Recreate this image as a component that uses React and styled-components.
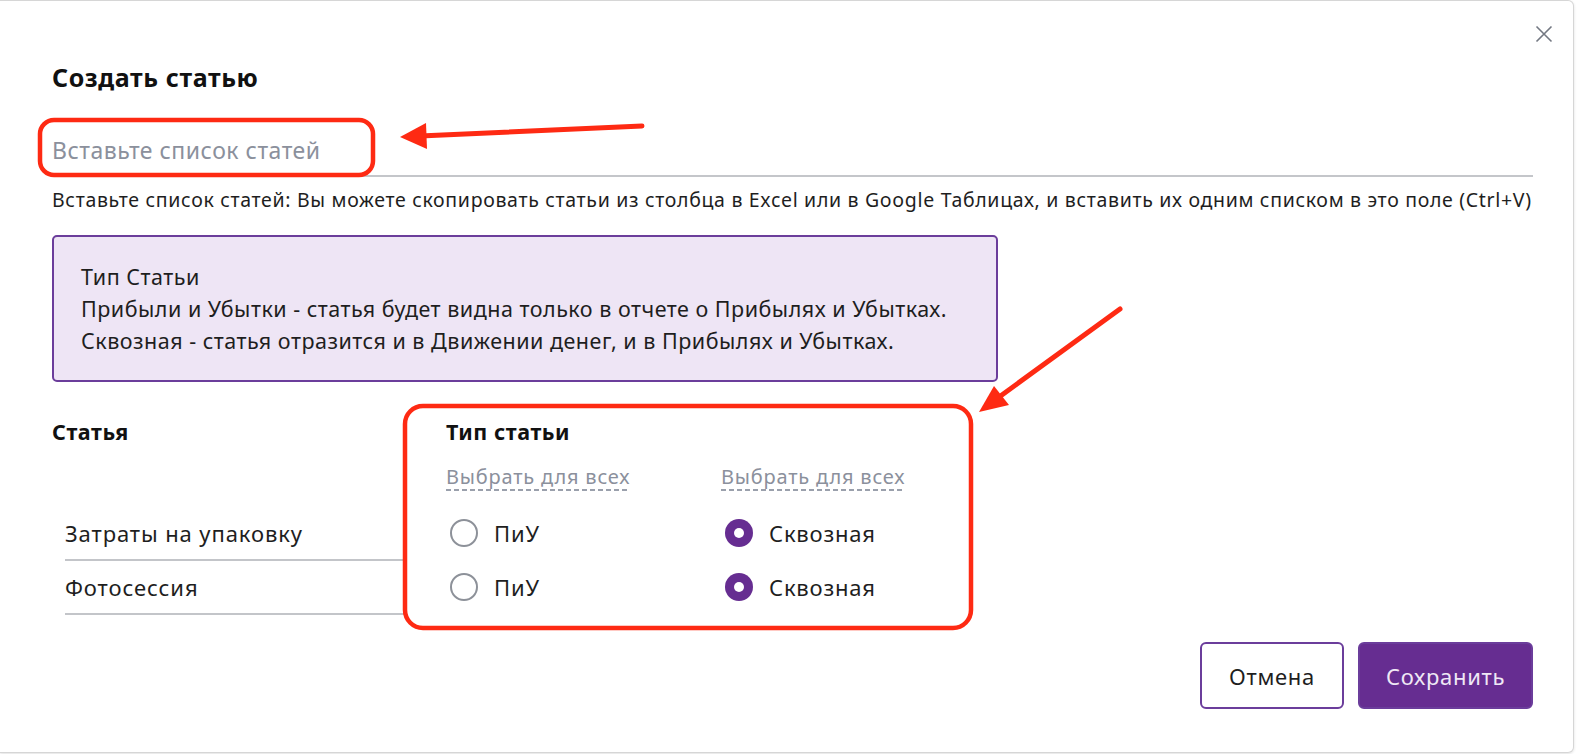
import React from "react"
import styled, { createGlobalStyle } from "styled-components"

const GlobalStyle = createGlobalStyle`
  html, body { margin: 0; padding: 0; background: #fff; }
  body { font-family: "Noto Sans", "Open Sans", sans-serif; color: #1e1e1e; }
  * { box-sizing: border-box; }
`;

const Page = styled.div`
  position: relative;
  width: 1580px;
  height: 754px;
  overflow: hidden;
  background: #fff;
`;

const Modal = styled.div`
  position: relative;
  width: 1574px;
  height: 753px;
  padding: 62px 40px 0 52px;
  background: #fff;
  border: 1px solid #d6d6d6;
  border-left: none;
  border-radius: 0 6px 6px 0;
  box-shadow: 0 1px 3px rgba(0, 0, 0, 0.12);
  display: flex;
  flex-direction: column;
`;

const Close = styled.button`
  position: absolute;
  top: 22px;
  right: 18px;
  width: 22px;
  height: 22px;
  padding: 0;
  border: none;
  background: none;
  display: flex;
  align-items: center;
  justify-content: center;
  cursor: pointer;
`;

const Title = styled.h2`
  margin: 0;
  font-size: 25px;
  line-height: 28px;
  font-weight: 700;
  letter-spacing: 0.6px;
  color: #111;
`;

const PasteInput = styled.input`
  margin-top: 34px;
  width: 100%;
  height: 52px;
  padding: 0;
  border: none;
  border-bottom: 2px solid #c4c6ca;
  outline: none;
  font-family: inherit;
  font-size: 23px;
  letter-spacing: 0.5px;
  color: #222;
  background: transparent;

  &::placeholder {
    color: #8b909c;
  }
`;

const Hint = styled.div`
  margin-top: 12px;
  font-size: 19.5px;
  line-height: 22px;
  letter-spacing: 0.68px;
  white-space: nowrap;
  color: #1e1e1e;
`;

const InfoBox = styled.div`
  margin-top: 24px;
  width: 946px;
  height: 147px;
  padding: 24px 27px 0;
  background: #eee5f5;
  border: 2px solid #6b3d9b;
  border-radius: 5px;
  font-size: 21.5px;
  line-height: 32px;
  letter-spacing: 0.5px;
  color: #1e1e1e;
`;

const Table = styled.div`
  margin-top: 38px;
  display: grid;
  grid-template-columns: 394px 275px 1fr;
  grid-auto-rows: auto;
`;

const HeadCell = styled.div`
  grid-column: ${p => p.$span || "auto"};
  font-size: 21.5px;
  line-height: 24px;
  font-weight: 700;
  letter-spacing: 0.55px;
  color: #111;
`;

const SelectCell = styled.div`
  padding-top: 21px;
  grid-column: ${p => p.$col};
`;

const SelectAll = styled.span`
  display: inline-block;
  padding-bottom: 2px;
  font-size: 20px;
  line-height: 24px;
  letter-spacing: 0.8px;
  color: #8b909c;
  background: repeating-linear-gradient(to right, #9aa0ac 0 5px, transparent 5px 8px) left bottom / 100% 2px no-repeat;
  cursor: pointer;
`;

const NameCell = styled.div`
  grid-column: 1;
  margin: ${p => (p.$first ? "16px" : "0")} 40px 0 13px;
  height: 54px;
  display: flex;
  align-items: center;
  border-bottom: 2px solid #c3c5c9;
  font-size: 22px;
  letter-spacing: 0.9px;
  color: #1e1e1e;
`;

const RadioCell = styled.label`
  margin-top: ${p => (p.$first ? "16px" : "0")};
  height: 54px;
  padding-bottom: 2px;
  display: flex;
  align-items: center;
  gap: 16px;
  font-size: 22px;
  letter-spacing: 0.8px;
  color: #1e1e1e;
  cursor: pointer;
`;

const Dot = styled.span`
  width: 28px;
  height: 28px;
  margin-left: 4px;
  border-radius: 50%;
  flex-shrink: 0;
  position: relative;
  border: ${p => (p.$on ? "none" : "2px solid #8d9199")};
  background: ${p => (p.$on ? "#662d91" : "#fff")};

  &::after {
    content: "";
    display: ${p => (p.$on ? "block" : "none")};
    position: absolute;
    left: 9px;
    top: 9px;
    width: 10px;
    height: 10px;
    border-radius: 50%;
    background: #fff;
  }
`;

const Footer = styled.div`
  margin-top: 27px;
  display: flex;
  justify-content: flex-end;
  gap: 14px;
`;

const Button = styled.button`
  height: 67px;
  padding: 0 20px;
  min-width: ${p => (p.$primary ? "175px" : "144px")};
  border-radius: 6px;
  border: 2px solid #6b3d9b;
  background: ${p => (p.$primary ? "#662d91" : "#fff")};
  color: ${p => (p.$primary ? "#efe8f5" : "#1e1e1e")};
  font-family: inherit;
  font-size: 22px;
  letter-spacing: 0.7px;
  cursor: pointer;
`;

const Marks = styled.svg`
  position: absolute;
  left: 0;
  top: 0;
  pointer-events: none;
`;

const rows = [
  { name: "Затраты на упаковку" },
  { name: "Фотосессия" },
];

function Annotations() {
  const red = "#fe2a13";
  return (
    <Marks width="1580" height="754" viewBox="0 0 1580 754">
      <rect x="40" y="120" width="333" height="55" rx="14" fill="none" stroke={red} strokeWidth="4.5" />
      <line x1="642" y1="126" x2="420" y2="136" stroke={red} strokeWidth="5" strokeLinecap="round" />
      <polygon points="400,137 426,123 427,149" fill={red} />
      <rect x="405" y="406" width="566" height="222" rx="18" fill="none" stroke={red} strokeWidth="4.5" />
      <line x1="1120" y1="309" x2="995" y2="400" stroke={red} strokeWidth="5" strokeLinecap="round" />
      <polygon points="979,412 994,386 1009,405" fill={red} />
    </Marks>
  );
}

export default function App() {
  return (
    <Page>
      <GlobalStyle />
      <Modal>
        <Close aria-label="Закрыть">
          <svg width="18" height="18" viewBox="0 0 18 18">
            <path d="M1.5 1.5 L16.5 16.5 M16.5 1.5 L1.5 16.5" stroke="#737882" strokeWidth="1.6" />
          </svg>
        </Close>
        <Title>Создать статью</Title>
        <PasteInput placeholder="Вставьте список статей" />
        <Hint>
          Вставьте список статей: Вы можете скопировать статьи из столбца в Excel или в Google Таблицах, и вставить их одним списком в это поле (Ctrl+V)
        </Hint>
        <InfoBox>
          Тип Статьи
          <br />
          Прибыли и Убытки - статья будет видна только в отчете о Прибылях и Убытках.
          <br />
          Сквозная - статья отразится и в Движении денег, и в Прибылях и Убытках.
        </InfoBox>
        <Table>
          <HeadCell>Статья</HeadCell>
          <HeadCell $span="2 / 4">Тип статьи</HeadCell>
          <SelectCell $col="2">
            <SelectAll>Выбрать для всех</SelectAll>
          </SelectCell>
          <SelectCell $col="3">
            <SelectAll>Выбрать для всех</SelectAll>
          </SelectCell>
          {rows.map((r, i) => (
            <React.Fragment key={r.name}>
              <NameCell $first={i === 0}>{r.name}</NameCell>
              <RadioCell $first={i === 0}>
                <Dot />
                ПиУ
              </RadioCell>
              <RadioCell $first={i === 0}>
                <Dot $on />
                Сквозная
              </RadioCell>
            </React.Fragment>
          ))}
        </Table>
        <Footer>
          <Button>Отмена</Button>
          <Button $primary>Сохранить</Button>
        </Footer>
      </Modal>
      <Annotations />
    </Page>
  );
}
